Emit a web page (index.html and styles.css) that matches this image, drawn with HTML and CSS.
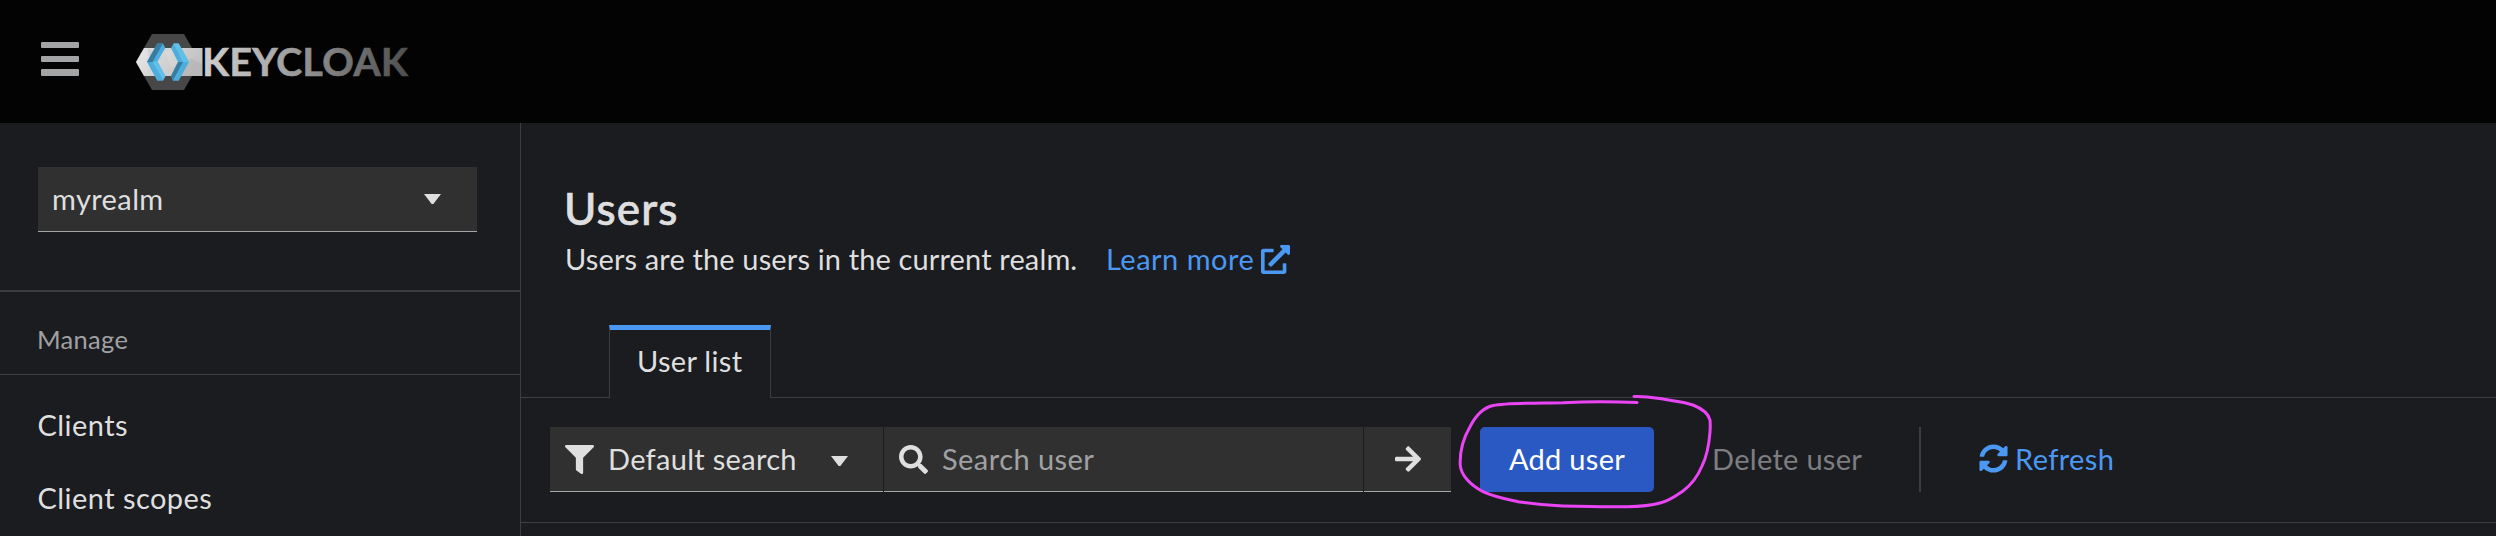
FILE: index.html
```html
<!DOCTYPE html>
<html lang="en">
<head>
<meta charset="utf-8">
<title>Users - Keycloak</title>
<link rel="stylesheet" href="styles.css">
</head>
<body>
<header class="masthead">
  <button class="menu" aria-label="Menu"><span></span><span></span><span></span></button>
  <svg class="logo" viewBox="0 0 276 56" role="img" aria-label="Keycloak">
    <defs>
      <linearGradient id="word" gradientUnits="userSpaceOnUse" x1="69" y1="0" x2="273" y2="10">
        <stop offset="0" stop-color="#cdcdcd"/><stop offset=".3" stop-color="#b0b0b0"/><stop offset=".6" stop-color="#838383"/><stop offset="1" stop-color="#4e4e4e"/>
      </linearGradient>
      <linearGradient id="band" x1="0" y1="0" x2="1" y2=".3">
        <stop offset="0" stop-color="#e4e4e4"/><stop offset="1" stop-color="#c2c2c2"/>
      </linearGradient>
    </defs>
    <path fill="#474747" d="M16 0h32l16 28-16 28H16L0 28z"/>
    <path fill="url(#band)" d="M8 14h58.500v28H8L0 28z"/>
    <path fill="#fff" opacity=".12" d="M0 28l8-14 8 14-8 14zM29 18l12-4 6 12-12 8z"/>
    <path fill="#000" opacity=".05" d="M46 42l8-18 12.500 6v12zM12 14l14 10-12 8z"/>
    <path fill="#4cadde" d="M21.300 9.500H27l2.300 4.500L21 28l8.300 14-2.300 4.700h-5.700L11 28z"/>
    <path fill="#387c9f" d="M21.300 9.500H27L16.500 28H11z"/>
    <path fill="#62bfe6" d="M16.500 28l5-1 8 15-2.300 4z"/>
    <path fill="#4cadde" d="M37.500 9.500h5.200L53 28 42.700 46.700H37L35 42l7-14-7-14z"/>
    <path fill="#62bfe6" d="M37.500 9.500h5.200L53 28h-6z"/>
    <path fill="#387c9f" d="M42 28h5l-9.800 18L35 42z"/>
    <text class="wordmark" x="66.200" y="42" textLength="205.500" fill="url(#word)">KEYCLOAK</text>
  </svg>
</header>
<div class="page">
  <nav class="sidebar">
    <div class="realm">
      <button class="realm-select"><span class="t-realm">myrealm</span><i class="caret"></i></button>
    </div>
    <h2 class="nav-title">Manage</h2>
    <ul class="nav">
      <li>Clients</li>
      <li>Client scopes</li>
    </ul>
  </nav>
  <main class="main">
    <section class="intro">
      <h1>Users</h1>
      <p><span class="t-intro">Users are the users in the current realm.</span><a class="learn"><span>Learn more</span><svg class="icon" viewBox="0 0 512 512"><path fill="currentColor" d="M432 320h-32a16 16 0 0 0-16 16v112H64V128h144a16 16 0 0 0 16-16V80a16 16 0 0 0-16-16H48a48 48 0 0 0-48 48v352a48 48 0 0 0 48 48h352a48 48 0 0 0 48-48V336a16 16 0 0 0-16-16zM488 0H360c-21.400 0-32 25.900-17 41l35.700 35.700L135 320.400a24 24 0 0 0 0 34L157.700 377a24 24 0 0 0 34 0l243.600-243.700L471 169c15 15 41 4.500 41-17V24a24 24 0 0 0-24-24z"/></svg></a></p>
    </section>
    <div class="tabs"><div class="tab"><span>User list</span></div></div>
    <div class="toolbar">
      <button class="field filter">
        <svg class="icon" viewBox="0 0 512 512"><path fill="currentColor" d="M488 0H24C2.700 0-8 25.900 7.100 41L192 225.900V432c0 7.800 3.800 15.200 10.200 19.700l80 56C298 518.700 320 507.500 320 488V225.900L504.900 41C520 25.900 509.300 0 488 0z"/></svg>
        <span class="t-default">Default search</span><i class="caret"></i>
      </button>
      <div class="field search">
        <svg class="icon" viewBox="0 0 512 512"><path fill="currentColor" d="M505 442.700L405.300 343c-4.500-4.500-10.600-7-17-7H372c27.600-35.300 44-79.700 44-128C416 93.100 322.900 0 208 0S0 93.100 0 208s93.100 208 208 208c48.300 0 92.700-16.400 128-44v16.300c0 6.400 2.500 12.500 7 17l99.700 99.700c9.400 9.400 24.600 9.400 33.900 0l28.300-28.300c9.400-9.400 9.400-24.600.1-34zM208 336c-70.700 0-128-57.200-128-128 0-70.700 57.200-128 128-128 70.700 0 128 57.200 128 128 0 70.700-57.200 128-128 128z"/></svg>
        <span class="t-search">Search user</span>
      </div>
      <button class="field go" aria-label="Search"><svg class="arrow" viewBox="0 0 448 448"><path fill="currentColor" d="M190.500 34.900l22.200-22.200c9.400-9.400 24.600-9.400 33.900 0L441 207c9.400 9.400 9.400 24.600 0 33.900L246.600 435.300c-9.400 9.400-24.600 9.400-33.900 0l-22.200-22.200c-9.500-9.500-9.300-25 .4-34.300L311.400 264H24c-13.300 0-24-10.700-24-24v-32c0-13.300 10.700-24 24-24h287.400L190.900 69.200c-9.800-9.300-10-24.800-.4-34.300z"/></svg></button>
      <button class="add"><span>Add user</span><svg class="scribble" viewBox="0 0 270 120" fill="none" stroke="#e945f5" stroke-width="3" stroke-linecap="round"><path d="M184 6.500C195 6 203 7.500 213 9C223 11 233 11.500 243 15C253 19 258.500 24 260 30Q260.500 35 260 42C259 55 257.500 65 252 76C247 88 241 95 233 101C225 106.500 219 111 210 113C201 115.500 190 116.500 177 116.700C155 117 135 116.600 113 116C97 115.500 83 114 68 111.700C55 109 44 107 33 101.700C20 95 11 85 10.200 75C9.500 58 14 47 20 36.700C25 27 32 18 43 15.500C58 12.500 90 13.200 113 12.700C140 11.500 165 11.700 187 12.600"/></svg></button>
      <button class="delete">Delete user</button>
      <div class="divider"></div>
      <button class="refresh"><svg class="icon" viewBox="0 0 512 512"><path fill="currentColor" d="M370.700 133.300C339.500 104 298.900 88 255.800 88c-77.500.1-144.300 53.200-162.800 126.900-1.300 5.400-6.100 9.100-11.700 9.100H24.100c-7.500 0-13.200-6.800-11.800-14.200C33.900 94.900 134.800 8 256 8c66.400 0 126.800 26.100 171.300 68.700L463 41C478.100 25.900 504 36.600 504 57.900V192c0 13.300-10.700 24-24 24H345.900c-21.400 0-32.100-25.900-17-41zM32 296h134.100c21.400 0 32.100 25.900 17 41l-41.800 41.800c31.300 29.300 71.800 45.300 114.900 45.300 77.400-.1 144.300-53.100 162.800-126.800 1.300-5.400 6.100-9.100 11.700-9.100h57.300c7.500 0 13.200 6.800 11.800 14.200C478.100 417.100 377.200 504 256 504c-66.400 0-126.800-26.100-171.300-68.700L49 471C33.900 486.100 8 475.400 8 454.100V320c0-13.300 10.700-24 24-24z"/></svg><span>Refresh</span></button>
    </div>
  </main>
</div>
</body>
</html>
```

FILE: styles.css
```css
* { box-sizing: border-box; margin: 0; padding: 0; }
html, body { height: 536px; overflow: hidden; }
body { background: #1b1c20; color: #dfdfdf; font: 29px/40px Lato, "Open Sans", sans-serif; letter-spacing: .3px; display: flex; flex-direction: column; white-space: nowrap; }
button { background: none; border: 0; color: inherit; font: inherit; text-align: left; letter-spacing: inherit; }
ul { list-style: none; }
.icon { width: 29px; height: 29px; flex: none; }

.masthead { height: 123px; flex: none; background: #030303; display: flex; align-items: flex-start; padding: 34px 0 0 41px; }
.menu { width: 38px; display: flex; flex-direction: column; gap: 7.500px; padding-top: 8px; margin-right: 57px; }
.menu span { height: 6.200px; background: #a3a4a6; border-radius: 1px; }
.logo { width: 276px; height: 56px; }
.wordmark { font: 700 39px Lato, sans-serif; letter-spacing: 0; stroke: url(#word); stroke-width: .7px; }

.page { flex: 1; display: flex; min-height: 0; }
.sidebar { width: 521px; flex: none; border-right: 1px solid #3c3d40; }
.realm { height: 169px; padding: 44px 43px 0 38px; border-bottom: 2px solid #3c3d40; }
.realm-select { width: 100%; height: 65px; background: #303031; border-bottom: 1px solid #a5a6a8; display: flex; align-items: center; justify-content: space-between; padding: 0 36px 0 14px; }
.t-realm { letter-spacing: .4px; }
.caret { width: 17px; height: 10px; background: #dfdfdf; clip-path: polygon(0 0, 100% 0, 55% 100%, 45% 100%); }
.nav-title { height: 83px; border-bottom: 1px solid #3c3d40; padding: 27px 0 0 37px; font-size: 25.500px; font-weight: 400; line-height: 40px; color: #a0a1a3; }
.nav { padding: 30px 0 0 37.500px; letter-spacing: .45px; }
.nav li { height: 73px; }

.main { flex: 1; min-width: 0; }
.intro { height: 202px; padding: 59px 0 0 43px; }
.intro h1 { font-size: 44px; line-height: 52px; font-weight: 500; letter-spacing: 1.100px; -webkit-text-stroke: .7px; }
.intro p { display: flex; margin-top: 1px; height: 42px; padding: 4px 0 0 1px; }
.t-intro { width: 541px; letter-spacing: .14px; }
.learn, .refresh { color: #4b98f3; display: flex; }
.learn span { width: 155px; letter-spacing: .5px; }
.learn .icon { margin-top: 6px; }
.tabs { height: 73px; display: flex; }
.tabs::before { content: ""; width: 88px; border-bottom: 1px solid #3c3d40; }
.tabs::after { content: ""; flex: 1; border-bottom: 1px solid #3c3d40; }
.tab { width: 162px; border: 1px solid #3c3d40; border-top: 5px solid #4b98f3; border-bottom: 0; padding: 11px 0 0 27px; }
.toolbar { height: 125px; border-bottom: 1px solid #3c3d40; padding: 29px 0 0 29px; display: flex; }
.field { height: 65px; background: #303031; border-bottom: 1px solid #a5a6a8; display: flex; align-items: center; padding: 0 0 0 15px; margin-right: 1px; }
.filter { width: 333px; }
.filter .t-default { width: 223px; padding-left: 14px; }
.filter .caret { margin: 4px 0 0 14px; }
.search { width: 479px; }
.t-search { color: #a0a1a3; padding-left: 14px; letter-spacing: .45px; }
.go { width: 87px; padding-left: 31px; margin-right: 29px; }
.arrow { width: 26px; height: 26px; }
.add { width: 174px; height: 65px; background: #2b59c3; color: #fff; border-radius: 5px; text-align: center; position: relative; padding-bottom: 2px; }
.scribble { position: absolute; left: -30px; top: -37px; width: 270px; height: 120px; overflow: visible; }
.delete { height: 63px; width: 207px; margin-left: 58px; color: #7d7e80; }
.divider { width: 2px; height: 65px; background: #3c3d40; }
.refresh { height: 63px; align-items: center; margin-left: 58px; gap: 7px; letter-spacing: .4px; }
```
